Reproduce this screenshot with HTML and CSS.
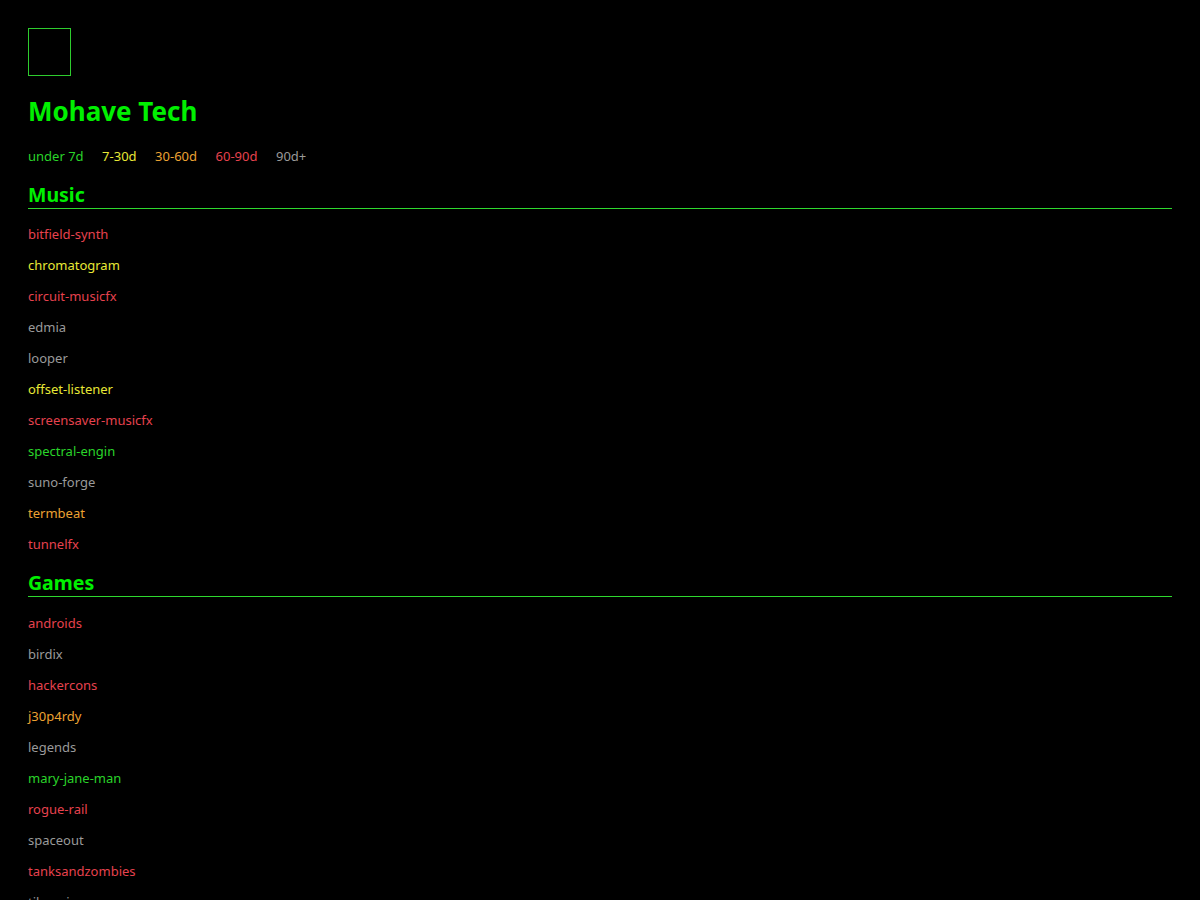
FILE: index.html
```html
<!DOCTYPE html>
<html lang="en">
<head>
<meta charset="utf-8">
<title>Mohave Tech</title>
<link rel="stylesheet" href="styles.css">
</head>
<body>
<header class="masthead">
  <div class="logo"></div>
  <h1 class="title">Mohave Tech</h1>
  <nav class="legend">
    <span class="age-fresh">under 7d</span>
    <span class="age-recent">7-30d</span>
    <span class="age-mid">30-60d</span>
    <span class="age-old">60-90d</span>
    <span class="age-stale">90d+</span>
  </nav>
</header>

<section class="group">
  <h2 class="group-title">Music</h2>
  <ul class="projects">
    <li><a class="age-old" href="#">bitfield-synth</a></li>
    <li><a class="age-recent" href="#">chromatogram</a></li>
    <li><a class="age-old" href="#">circuit-musicfx</a></li>
    <li><a class="age-stale" href="#">edmia</a></li>
    <li><a class="age-stale" href="#">looper</a></li>
    <li><a class="age-recent" href="#">offset-listener</a></li>
    <li><a class="age-old" href="#">screensaver-musicfx</a></li>
    <li><a class="age-fresh" href="#">spectral-engin</a></li>
    <li><a class="age-stale" href="#">suno-forge</a></li>
    <li><a class="age-mid" href="#">termbeat</a></li>
    <li><a class="age-old" href="#">tunnelfx</a></li>
  </ul>
</section>

<section class="group">
  <h2 class="group-title">Games</h2>
  <ul class="projects">
    <li><a class="age-old" href="#">androids</a></li>
    <li><a class="age-stale" href="#">birdix</a></li>
    <li><a class="age-old" href="#">hackercons</a></li>
    <li><a class="age-mid" href="#">j30p4rdy</a></li>
    <li><a class="age-stale" href="#">legends</a></li>
    <li><a class="age-fresh" href="#">mary-jane-man</a></li>
    <li><a class="age-old" href="#">rogue-rail</a></li>
    <li><a class="age-stale" href="#">spaceout</a></li>
    <li><a class="age-old" href="#">tanksandzombies</a></li>
    <li><a class="age-stale" href="#">tilemain</a></li>
  </ul>
</section>
</body>
</html>
```

FILE: styles.css
```css
html {
  background: #000;
}

body {
  margin: 0;
  padding: 28px;
  background: #000;
  color: #bbb;
  font-family: "Noto Sans", "Open Sans", sans-serif;
  font-size: 13px;
}

.logo {
  width: 41px;
  height: 46px;
  border: 1px solid #2ecc2e;
}

.title {
  margin: 20px 0 0;
  font-size: 26px;
  line-height: 31px;
  font-weight: 700;
  color: #00f000;
}

.legend {
  display: flex;
  gap: 18.5px;
  margin-top: 20px;
  line-height: 18px;
}

.group {
  margin-top: 18px;
}

.group + .group {
  margin-top: 11px;
}

.group-title {
  margin: 0;
  padding-bottom: 1px;
  border-bottom: 1px solid #2ed82e;
  font-size: 19.5px;
  line-height: 24px;
  font-weight: 700;
  color: #00f000;
}

.projects {
  list-style: none;
  margin: 10px 0 0;
  padding: 0;
}

.group + .group .projects {
  margin-top: 11px;
}

.projects li {
  line-height: 31px;
}

.projects a {
  text-decoration: none;
}

.age-fresh { color: #2ad42a; }
.age-recent { color: #e8e836; }
.age-mid { color: #eca232; }
.age-old { color: #e6424e; }
.age-stale { color: #9a9a9a; }
```
